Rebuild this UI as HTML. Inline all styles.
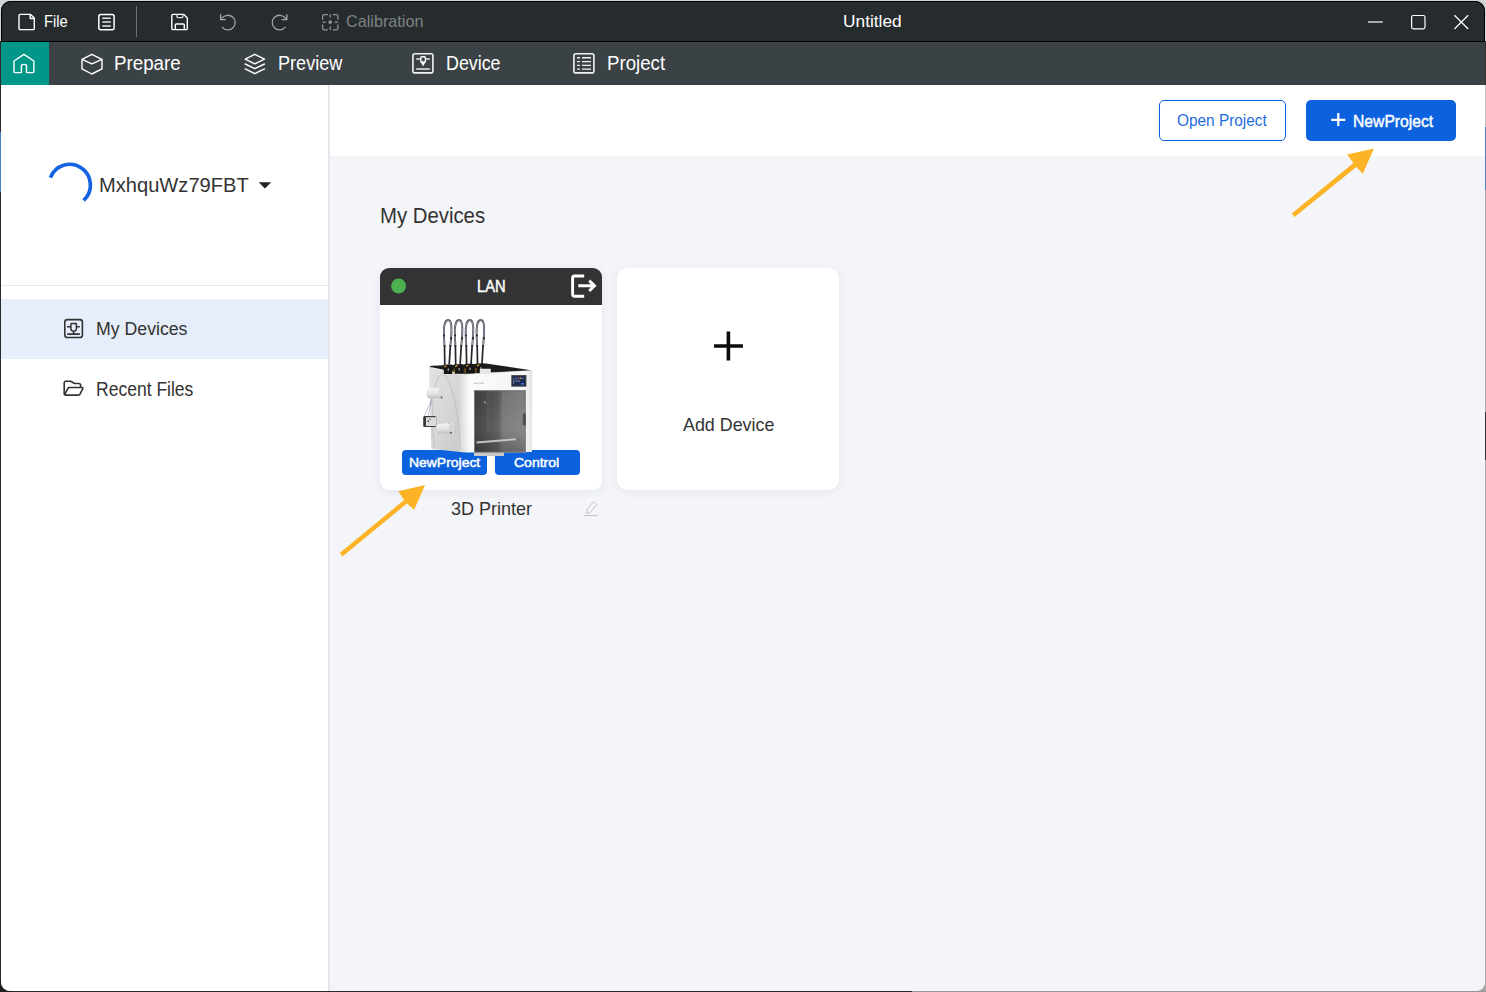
<!DOCTYPE html>
<html><head><meta charset="utf-8">
<style>
*{margin:0;padding:0;box-sizing:border-box}
html,body{width:1486px;height:992px;overflow:hidden;background:#2a2a2a;font-family:"Liberation Sans",sans-serif;position:relative}
.abs{position:absolute}
.t{position:absolute;white-space:nowrap;transform-origin:0 0}
.ov{position:absolute;left:0;top:0;z-index:5}
#win{position:absolute;left:1px;top:1px;width:1484px;height:990px;border-radius:9px;overflow:hidden;background:#fff}
</style></head><body>
<div class="abs" style="left:0;top:0;width:1486px;height:1px;background:#d2d3d4"></div>
<div class="abs" style="left:1485px;top:0;width:1px;height:992px;background:#a9a9a9"></div>
<div class="abs" style="left:1485px;top:41px;width:1px;height:44px;background:#333"></div>
<div class="abs" style="left:1485px;top:85px;width:1px;height:42px;background:#c8c8c8"></div>
<div class="abs" style="left:1485px;top:127px;width:1px;height:63px;background:#4a80c8"></div>
<div class="abs" style="left:1485px;top:412px;width:1px;height:48px;background:#333"></div>
<div class="abs" style="left:0;top:132px;width:1px;height:60px;background:#4a80c8"></div>
<div class="abs" style="left:0;top:0;width:12px;height:12px;background:#d2d3d4"></div>
<div class="abs" style="left:0;top:0;width:1px;height:41px;background:#d2d3d4"></div>
<div class="abs" style="left:1474px;top:0;width:12px;height:12px;background:#d2d3d4"></div>
<div class="abs" style="left:0;top:980px;width:12px;height:12px;background:#1e1e1e"></div>
<div class="abs" style="left:1474px;top:980px;width:12px;height:12px;background:#a9a9a9"></div>
<div class="abs" style="left:912px;top:991px;width:574px;height:1px;background:#9a9a9a"></div>
<div id="win">
  <div class="abs" style="left:0;top:0;width:1484px;height:41px;background:#262c2e;border-top:1px solid #101213"></div>
  <div class="abs" style="left:0;top:40px;width:1484px;height:1px;background:#000"></div>
  <div class="abs" style="left:0;top:41px;width:1484px;height:43px;background:#3b4245"></div>
  <div class="abs" style="left:0;top:41px;width:48px;height:43px;background:#009688"></div>
  <div class="abs" style="left:0;top:84px;width:327px;height:906px;background:#fff"></div>
  <div class="abs" style="left:327px;top:84px;width:1px;height:906px;background:#e2e3e6"></div>
  <div class="abs" style="left:328px;top:84px;width:1px;height:906px;background:#ebecf0"></div>
  <div class="abs" style="left:329px;top:84px;width:1155px;height:906px;background:#f3f5f9"></div>
  <div class="abs" style="left:329px;top:84px;width:1155px;height:71px;background:#fff"></div>
  <div class="abs" style="left:0;top:284px;width:327px;height:1px;background:#e8e8e8"></div>
  <div class="abs" style="left:0;top:298px;width:327px;height:60px;background:#e5eefa"></div>
  <!-- header buttons -->
  <div class="abs" style="left:1158px;top:99px;width:127px;height:41px;border:1px solid #0e62de;border-radius:5px;background:#fff"></div>
  <div class="abs" style="left:1305px;top:99px;width:150px;height:41px;border-radius:5px;background:#0c62de"></div>
  <!-- cards -->
  <div class="abs" style="left:379px;top:267px;width:222px;height:222px;border-radius:9px;background:#fff;box-shadow:0 2px 10px rgba(30,40,70,0.07);overflow:hidden">
     <div class="abs" style="left:0;top:0;width:222px;height:37px;background:#333"></div>
  </div>
  <div class="abs" style="left:616px;top:267px;width:222px;height:222px;border-radius:10px;background:#fff;box-shadow:0 2px 10px rgba(30,40,70,0.07)"></div>
  <div class="abs" style="left:401px;top:449px;width:85px;height:25px;border-radius:4px;background:#0c62de"></div>
  <div class="abs" style="left:494px;top:449px;width:85px;height:25px;border-radius:4px;background:#0c62de"></div>
</div>
<svg class="ov" width="1486" height="992" viewBox="0 0 1486 992" style="z-index:3">
<defs>
 <linearGradient id="corner" x1="0" y1="0" x2="1" y2="0">
  <stop offset="0" stop-color="#d6d6d6" stop-opacity="0"/><stop offset="0.45" stop-color="#e6e6e6"/><stop offset="1" stop-color="#f7f7f7" stop-opacity="0"/>
 </linearGradient>
 <linearGradient id="lside" x1="0" y1="0" x2="1" y2="1">
  <stop offset="0" stop-color="#e2e2e2"/><stop offset="0.5" stop-color="#d6d6d6"/><stop offset="1" stop-color="#c8c8c8"/>
 </linearGradient>
 <linearGradient id="front" x1="0" y1="0" x2="1" y2="0">
  <stop offset="0" stop-color="#e9e9e9"/><stop offset="0.08" stop-color="#fbfbfb"/><stop offset="0.9" stop-color="#f4f4f4"/><stop offset="1" stop-color="#e4e4e4"/>
 </linearGradient>
 <linearGradient id="door" x1="0" y1="0" x2="1" y2="0">
  <stop offset="0" stop-color="#454545"/><stop offset="0.45" stop-color="#626262"/><stop offset="0.55" stop-color="#7a7a7a"/><stop offset="1" stop-color="#8a8a8a"/>
 </linearGradient>
 <linearGradient id="doorv" x1="0" y1="0" x2="0" y2="1">
  <stop offset="0" stop-color="#000" stop-opacity="0.15"/><stop offset="0.6" stop-color="#000" stop-opacity="0"/><stop offset="1" stop-color="#000" stop-opacity="0.2"/>
 </linearGradient>
 <linearGradient id="spool" x1="0" y1="0" x2="0" y2="1">
  <stop offset="0" stop-color="#f4f4f4"/><stop offset="0.6" stop-color="#e2e2e2"/><stop offset="1" stop-color="#bdbdbd"/>
 </linearGradient>
 <linearGradient id="tube" x1="0" y1="0" x2="0" y2="1">
  <stop offset="0" stop-color="#7a7a88"/><stop offset="0.45" stop-color="#5a5a66"/><stop offset="0.5" stop-color="#2a2a30"/><stop offset="1" stop-color="#1e1e22"/>
 </linearGradient>
</defs>
<!-- left side panel -->
<path d="M429.2 368.5 Q429 367 431 367 L464.5 374 L464.5 452.5 L433 449 Q431.3 448.8 431.3 446.8 L429.4 392 Z" fill="url(#lside)"/>
<path d="M457 372.6 L470 373.9 V452.5 L457 451 Z" fill="url(#corner)"/>
<!-- ellipse outline on side -->
<path d="M434.5 449 C431.5 422 431.5 396 436.5 381 C439.5 373.5 444 372.5 447.5 378.5 C452.5 388 458.5 412 460.5 449" fill="none" stroke="#b4b4b4" stroke-width="0.6"/>
<!-- front panel -->
<path d="M464.5 374 L532.4 370.8 L532 452 L464.5 452.5 Z" fill="url(#front)"/>
<!-- top dark band -->
<path d="M429.5 367 Q430 365.8 432 365.8 L486 363.6 L532.6 370.4 L464.5 374.2 Z" fill="#1c1c1c"/>
<path d="M431 367.6 L464.5 374.2 L532.6 370.6" fill="none" stroke="#ffffff" stroke-width="0.8" stroke-opacity="0.7"/>
<!-- door -->
<rect x="474" y="390.2" width="52" height="62.3" fill="url(#door)"/>
<rect x="474" y="390.2" width="52" height="62.3" fill="url(#doorv)"/>
<rect x="474" y="452.5" width="30" height="3.5" fill="#c8c8c8"/>
<rect x="502" y="392" width="21.5" height="46" fill="#8a8a8a" opacity="0.35"/>
<path d="M488 392 V432" stroke="#6a6a6a" stroke-width="1" opacity="0.6"/>
<rect x="474.5" y="390.7" width="51" height="61.5" fill="none" stroke="#8a8a8a" stroke-width="0.8"/>
<path d="M476.6 442.6 L515.7 439.2" stroke="#c4c4c4" stroke-width="2"/>
<path d="M484 401 L486 403.5" stroke="#cfd4e8" stroke-width="0.8"/>
<!-- handle -->
<rect x="522.8" y="413.4" width="3" height="12" rx="0.8" fill="#505050"/>
<!-- screen -->
<rect x="511.3" y="375.1" width="15.1" height="11.6" fill="#3a3f4a"/>
<rect x="512.5" y="376.3" width="12.7" height="9.2" fill="#1e2b4c"/>
<rect x="515.2" y="377.6" width="1.4" height="1.4" fill="#4a7be0"/>
<rect x="517.5" y="377.6" width="1.4" height="1.4" fill="#d06a6a"/>
<rect x="519.8" y="377.6" width="1.4" height="1.4" fill="#e0c050"/>
<rect x="522" y="377.6" width="1.4" height="1.4" fill="#4a7be0"/>
<rect x="515.2" y="380.6" width="5" height="0.9" fill="#8899cc"/>
<rect x="521" y="383" width="3" height="1.6" fill="#3d6fe8"/>
<rect x="513.3" y="378" width="1" height="6" fill="#6677aa"/>
<!-- logo -->
<path d="M473.8 383.2 H478 M479 383.2 H484" stroke="#9a9a9a" stroke-width="0.6"/>
<!-- spools -->
<path d="M428 389 Q427 388 429 387.8 L440 387.8 Q443.4 388.4 443.4 393 Q443.4 397.8 440 398.3 L429 398.3 Q426.6 398 426.6 393 Q426.6 390 428 389 Z" fill="url(#spool)"/>
<ellipse cx="441" cy="393" rx="2.4" ry="5" fill="#d8d8d8"/>
<circle cx="441.5" cy="397.6" r="1" fill="#555"/>
<path d="M438.5 424 L451 423 Q454 423.6 454 428.3 Q454 433.4 451 433.6 L438.5 433.6 Q436.6 433 436.6 428.5 Q436.6 424.4 438.5 424 Z" fill="url(#spool)"/>
<ellipse cx="451.2" cy="428.4" rx="2.4" ry="5" fill="#d6d6d6"/>
<circle cx="450.8" cy="432.8" r="1" fill="#555"/>
<circle cx="449" cy="422.9" r="0.9" fill="#bbb"/>
<!-- wire -->
<path d="M431.8 399 L424.5 416 M431.8 401 L428 416" stroke="#7a7f9a" stroke-width="0.5" fill="none"/>
<!-- box -->
<rect x="423.2" y="416" width="13" height="11" rx="1.5" fill="#3a3a3a"/>
<rect x="426" y="417.2" width="10" height="8.8" fill="#dcdcdc"/>
<rect x="427.6" y="420.5" width="1.4" height="1.4" fill="#333"/>
<rect x="429.5" y="418.6" width="1.2" height="1.2" fill="#555"/>
<!-- connectors -->
<path d="M443.5 364.6 H451.7 L452.3 374.1 H443.9 Z" fill="#161616"/>
<path d="M443.9 366.8 L446.1 365.2 L446.9 366.2 L444.7 367.6 Z" fill="#e3a21e"/>
<rect x="447.7" y="368.4" width="1.1" height="2.4" fill="#bdbdbd"/>
<path d="M454.4 364.2 H462.6 L463.2 373.7 H454.8 Z" fill="#161616"/>
<path d="M454.8 366.4 L457.0 364.8 L457.8 365.8 L455.6 367.2 Z" fill="#e3a21e"/>
<rect x="458.6" y="368.0" width="1.1" height="2.4" fill="#bdbdbd"/>
<rect x="453.8" y="368.7" width="0.7" height="4.8" fill="#d79a1c"/>
<path d="M465.3 363.8 H473.5 L474.1 373.3 H465.7 Z" fill="#161616"/>
<path d="M465.7 366.0 L467.9 364.4 L468.7 365.4 L466.5 366.8 Z" fill="#e3a21e"/>
<rect x="469.5" y="367.6" width="1.1" height="2.4" fill="#bdbdbd"/>
<rect x="464.7" y="368.3" width="0.7" height="4.8" fill="#d79a1c"/>
<path d="M476.2 363.4 H484.4 L485.0 372.9 H476.6 Z" fill="#161616"/>
<path d="M476.6 365.6 L478.8 364.0 L479.6 365.0 L477.4 366.4 Z" fill="#e3a21e"/>
<rect x="480.4" y="367.2" width="1.1" height="2.4" fill="#bdbdbd"/>
<rect x="475.6" y="367.9" width="0.7" height="4.8" fill="#d79a1c"/>
<rect x="479.8" y="368.8" width="11" height="5.2" rx="0.8" fill="#e6e6e6"/>
<!-- tubes -->
<path d="M444.5 346 C443.8 336 443.7 330 444.2 326.5 C444.8 322 446.9 320 448.1 320 C449.7 320 451.2 322.5 451.4 327.5 C451.6 333 451.0 340 450.4 346" fill="none" stroke="#3c3c48" stroke-width="1.9" stroke-linecap="round"/>
<path d="M444.5 346 C443.8 336 443.7 330 444.2 326.5 C444.8 322 446.9 320 448.1 320 C449.7 320 451.2 322.5 451.4 327.5 C451.6 333 451.0 340 450.4 346" fill="none" stroke="#c8c8d8" stroke-width="0.7" stroke-linecap="round"/>
<path d="M444.5 345 C444.6 352 444.7 358 444.8 364.5 M450.4 345 C450.0 352 449.6 358 449.2 364.5" fill="none" stroke="#25252c" stroke-width="1.7" stroke-linecap="butt"/>
<circle cx="444.2" cy="335.5" r="0.9" fill="#1a1a1a"/>
<circle cx="451.2" cy="338.3" r="1.1" fill="#1a1a1a"/>
<path d="M455.4 346 C454.7 336 454.6 330 455.1 326.5 C455.7 322 457.8 320 459.0 320 C460.6 320 462.1 322.5 462.3 327.5 C462.5 333 461.9 340 461.3 346" fill="none" stroke="#3c3c48" stroke-width="1.9" stroke-linecap="round"/>
<path d="M455.4 346 C454.7 336 454.6 330 455.1 326.5 C455.7 322 457.8 320 459.0 320 C460.6 320 462.1 322.5 462.3 327.5 C462.5 333 461.9 340 461.3 346" fill="none" stroke="#c8c8d8" stroke-width="0.7" stroke-linecap="round"/>
<path d="M455.4 345 C455.5 352 455.6 358 455.7 364.5 M461.3 345 C460.9 352 460.5 358 460.1 364.5" fill="none" stroke="#25252c" stroke-width="1.7" stroke-linecap="butt"/>
<circle cx="455.1" cy="335.5" r="0.9" fill="#1a1a1a"/>
<circle cx="462.1" cy="338.3" r="1.1" fill="#1a1a1a"/>
<path d="M466.3 346 C465.6 336 465.5 330 466.0 326.5 C466.6 322 468.7 320 469.9 320 C471.5 320 473.0 322.5 473.2 327.5 C473.4 333 472.8 340 472.2 346" fill="none" stroke="#3c3c48" stroke-width="1.9" stroke-linecap="round"/>
<path d="M466.3 346 C465.6 336 465.5 330 466.0 326.5 C466.6 322 468.7 320 469.9 320 C471.5 320 473.0 322.5 473.2 327.5 C473.4 333 472.8 340 472.2 346" fill="none" stroke="#c8c8d8" stroke-width="0.7" stroke-linecap="round"/>
<path d="M466.3 345 C466.4 352 466.5 358 466.6 364.5 M472.2 345 C471.8 352 471.4 358 471.0 364.5" fill="none" stroke="#25252c" stroke-width="1.7" stroke-linecap="butt"/>
<circle cx="466.0" cy="335.5" r="0.9" fill="#1a1a1a"/>
<circle cx="473.0" cy="338.3" r="1.1" fill="#1a1a1a"/>
<path d="M477.2 346 C476.5 336 476.4 330 476.9 326.5 C477.5 322 479.6 320 480.8 320 C482.4 320 483.9 322.5 484.1 327.5 C484.3 333 483.7 340 483.1 346" fill="none" stroke="#3c3c48" stroke-width="1.9" stroke-linecap="round"/>
<path d="M477.2 346 C476.5 336 476.4 330 476.9 326.5 C477.5 322 479.6 320 480.8 320 C482.4 320 483.9 322.5 484.1 327.5 C484.3 333 483.7 340 483.1 346" fill="none" stroke="#c8c8d8" stroke-width="0.7" stroke-linecap="round"/>
<path d="M477.2 345 C477.3 352 477.4 358 477.5 364.5 M483.1 345 C482.7 352 482.3 358 481.9 364.5" fill="none" stroke="#25252c" stroke-width="1.7" stroke-linecap="butt"/>
<circle cx="476.9" cy="335.5" r="0.9" fill="#1a1a1a"/>
<circle cx="483.9" cy="338.3" r="1.1" fill="#1a1a1a"/>
</svg>

<div class="t" style="left:43.9px;top:12.6px;font-size:17.01px;line-height:17.01px;transform:scaleX(0.869);color:#fff;font-weight:normal">File</div>
<div class="t" style="left:843.0px;top:12.5px;font-size:17.15px;line-height:17.15px;transform:scaleX(1.010);color:#fff;font-weight:normal">Untitled</div>
<div class="t" style="left:346.2px;top:12.6px;font-size:17.15px;line-height:17.15px;transform:scaleX(0.945);color:#7d8284;font-weight:normal">Calibration</div>
<div class="t" style="left:114.0px;top:53.5px;font-size:19.77px;line-height:19.77px;transform:scaleX(0.947);color:#fff;font-weight:normal">Prepare</div>
<div class="t" style="left:277.8px;top:53.5px;font-size:19.77px;line-height:19.77px;transform:scaleX(0.915);color:#fff;font-weight:normal">Preview</div>
<div class="t" style="left:445.8px;top:53.5px;font-size:19.77px;line-height:19.77px;transform:scaleX(0.902);color:#fff;font-weight:normal">Device</div>
<div class="t" style="left:606.6px;top:53.5px;font-size:19.77px;line-height:19.77px;transform:scaleX(0.944);color:#fff;font-weight:normal">Project</div>
<div class="t" style="left:99.2px;top:174.6px;font-size:20.20px;line-height:20.20px;transform:scaleX(0.996);color:#333;font-weight:normal">MxhquWz79FBT</div>
<div class="t" style="left:95.5px;top:320.2px;font-size:18.90px;line-height:18.90px;transform:scaleX(0.937);color:#333;font-weight:normal">My Devices</div>
<div class="t" style="left:95.5px;top:379.5px;font-size:19.48px;line-height:19.48px;transform:scaleX(0.900);color:#333;font-weight:normal">Recent Files</div>
<div class="t" style="left:1177.3px;top:113.2px;font-size:16.86px;line-height:16.86px;transform:scaleX(0.912);color:#1f6bdb;font-weight:normal">Open Project</div>
<div class="t" style="left:1353.3px;top:112.9px;font-size:17.15px;line-height:17.15px;transform:scaleX(0.915);color:#fff;font-weight:normal;-webkit-text-stroke:0.45px #fff">NewProject</div>
<div class="t" style="left:379.8px;top:204.7px;font-size:21.66px;line-height:21.66px;transform:scaleX(0.939);color:#333;font-weight:normal">My Devices</div>
<div class="t" style="left:476.6px;top:278.7px;font-size:15.99px;line-height:15.99px;transform:scaleX(0.920);color:#fff;font-weight:normal;-webkit-text-stroke:0.45px #fff">LAN</div>
<div class="t" style="left:408.9px;top:455.9px;font-size:13.08px;line-height:13.08px;transform:scaleX(1.065);color:#fff;font-weight:normal;-webkit-text-stroke:0.45px #fff">NewProject</div>
<div class="t" style="left:514.2px;top:455.9px;font-size:13.08px;line-height:13.08px;transform:scaleX(1.072);color:#fff;font-weight:normal;-webkit-text-stroke:0.45px #fff">Control</div>
<div class="t" style="left:450.7px;top:499.6px;font-size:18.17px;line-height:18.17px;transform:scaleX(0.992);color:#333;font-weight:normal">3D Printer</div>
<div class="t" style="left:682.8px;top:415.6px;font-size:18.17px;line-height:18.17px;transform:scaleX(0.984);color:#333;font-weight:normal">Add Device</div>

<svg class="ov" width="1486" height="992" viewBox="0 0 1486 992">
<g fill="none" stroke-linecap="round" stroke-linejoin="round">
 <!-- file -->
 <path d="M19 15.6 Q19 14.4 20.2 14.4 H30.6 L34.3 18.1 V28.4 Q34.3 29.6 33.1 29.6 H20.2 Q19 29.6 19 28.4 Z" stroke="#fff" stroke-width="1.4"/>
 <path d="M30.2 14.6 V18.5 H34.1" stroke="#fff" stroke-width="1.4"/>
 <!-- list -->
 <rect x="98.8" y="14.4" width="15.3" height="15.4" rx="2" stroke="#fff" stroke-width="1.5"/>
 <path d="M102.3 18.3 H110.8 M102.3 22.1 H110.8 M102.3 26 H110.8" stroke="#e6e6e6" stroke-width="1.5" stroke-linecap="butt"/>
 <!-- separator -->
 <path d="M136.5 6 V37" stroke="#6d7173" stroke-width="1" stroke-linecap="butt"/>
 <!-- save -->
 <path d="M171.8 15.6 Q171.8 14.4 173 14.4 H183.9 L187.3 17.9 V28.4 Q187.3 29.6 186.1 29.6 H173 Q171.8 29.6 171.8 28.4 Z" stroke="#fff" stroke-width="1.4"/>
 <path d="M176.9 14.6 V16.6 Q176.9 17.6 177.9 17.6 H181.9 Q182.9 17.6 182.9 16.6 V14.6" stroke="#ddd" stroke-width="1.3"/>
 <path d="M175.3 29.4 V25 Q175.3 24 176.3 24 H183.3 Q184.3 24 184.3 25 V29.4" stroke="#fff" stroke-width="1.4"/>
 <!-- undo -->
 <path d="M222.3 27.3 A7.3 7.3 0 1 0 222 18.2" stroke="#a3a5a6" stroke-width="1.3"/>
 <path d="M220.6 14.2 V19.6 H225.8" stroke="#a3a5a6" stroke-width="1.4" stroke-linecap="butt" stroke-linejoin="miter"/>
 <!-- redo -->
 <path d="M285.1 27.3 A7.3 7.3 0 1 1 285.4 18.2" stroke="#a3a5a6" stroke-width="1.3"/>
 <path d="M286.8 14.2 V19.6 H281.6" stroke="#a3a5a6" stroke-width="1.4" stroke-linecap="butt" stroke-linejoin="miter"/>
 <!-- calibration -->
 <g stroke="#8e9294" stroke-width="1.3" stroke-linecap="butt">
  <path d="M322.6 19.7 V16.2 Q322.6 14.6 324.2 14.6 H327.9"/>
  <path d="M332.7 14.6 H336.3 Q337.9 14.6 337.9 16.2 V19.7"/>
  <path d="M337.9 24.5 V28.2 Q337.9 29.8 336.3 29.8 H332.7"/>
  <path d="M327.9 29.8 H324.2 Q322.6 29.8 322.6 28.2 V24.5"/>
  <path d="M330.2 14.3 V17.6 M330.2 26.6 V30 M322.4 22.1 H325.8 M334.8 22.1 H338.2"/>
 </g>
 <circle cx="330.2" cy="22.1" r="1.9" fill="#8e9294"/>
 <!-- window controls -->
 <path d="M1368 22 H1382.8" stroke="#fff" stroke-width="1.2" stroke-linecap="butt"/>
 <rect x="1411.6" y="15.5" width="13.4" height="13.4" rx="1.8" stroke="#fff" stroke-width="1.2"/>
 <path d="M1454.4 15.3 L1468.2 29 M1468.2 15.3 L1454.4 29" stroke="#fff" stroke-width="1.2" stroke-linecap="butt"/>
 <!-- home -->
 <path d="M21.4 72.6 V66 Q21.4 64.4 23.95 64.4 Q26.5 64.4 26.5 66 V72.6 H32.9 Q33.85 72.6 33.85 71.7 V61 L23.9 54.4 L14 61 V71.7 Q14 72.6 14.9 72.6 Z" stroke="#fff" stroke-width="1.4"/>
 <!-- cube -->
 <path d="M91.8 54.3 L102 59.3 V68.9 L91.8 74 L82 68.9 V59.3 Z M82 59.3 L91.8 63.9 L102 59.3" stroke="#fff" stroke-width="1.4"/>
 <!-- layers -->
 <path d="M254.8 54.3 L264.5 59.2 L254.8 63.9 L245.2 59.2 Z M245.2 64 L254.8 68.7 L264.5 64 M245.2 68.9 L254.8 73.7 L264.5 68.9" stroke="#fff" stroke-width="1.4"/>
 <!-- device tab -->
 <rect x="412.9" y="53.8" width="20" height="19.1" rx="2" stroke="#f2f2f2" stroke-width="1.6"/>
 <path d="M416.2 59 H420.2 M425.7 59 H429.8 M416.2 69 H429.8" stroke="#e8e8e8" stroke-width="1.5" stroke-linecap="butt"/>
 <rect x="420.8" y="56.8" width="4.6" height="5.4" rx="1" stroke="#fff" stroke-width="1.4"/>
 <path d="M421.2 62.3 L423.1 65.8 L425 62.3 Z" fill="#fff" stroke="#fff" stroke-width="0.6"/>
 <!-- project tab -->
 <rect x="573.9" y="53.8" width="20" height="19.1" rx="2" stroke="#f2f2f2" stroke-width="1.6"/>
 <path d="M577 57.8 H579.9 M582 57.8 H591 M577 61.6 H579.9 M582 61.6 H591 M577 65.4 H579.9 M582 65.4 H591 M577 69.1 H579.9 M582 69.1 H591" stroke="#f0f0f0" stroke-width="1.4" stroke-linecap="butt"/>
 <!-- spinner -->
 <path d="M50.4 177.6 A20.7 20.7 0 1 1 83.6 200.4" stroke="#1463e0" stroke-width="3.7" stroke-linecap="butt"/>
 <!-- dropdown -->
 <path d="M258.7 182.3 H271.2 L264.9 188.6 Z" fill="#222" stroke="none"/>
 <!-- sidebar device icon -->
 <rect x="64.8" y="319.6" width="17.6" height="17.9" rx="2.6" stroke="#333" stroke-width="1.6"/>
 <path d="M67 326.7 H70.4 M76.8 326.7 H79.8" stroke="#333" stroke-width="1.4" stroke-linecap="butt"/>
 <path d="M70.9 324.2 Q70.9 323.6 71.5 323.6 H75.8 Q76.4 323.6 76.4 324.2 V329 Q76.4 330.8 73.65 331.2 Q70.9 330.8 70.9 329 Z" stroke="#333" stroke-width="1.5"/>
 <path d="M73.65 331.2 V333.5 M67.2 334.2 H79.9" stroke="#333" stroke-width="1.7" stroke-linecap="butt"/>
 <!-- folder -->
 <path d="M80.6 387.3 V385.2 Q80.6 383.5 78.9 383.5 H74.6 L70.6 381.2 H65.9 Q64.2 381.2 64.2 382.9 V393.4 Q64.2 395.1 65.9 395.1 H78.6 Q79.6 395.1 80 394.2 L82.8 388.6 Q83.2 387.5 82 387.5 H69.3 Q68.3 387.5 67.9 388.4 L64.6 394.6" stroke="#333" stroke-width="1.6"/>
 <!-- newproject plus -->
 <path d="M1331.2 119.8 H1345.3 M1338.3 113 V126.1" stroke="#fff" stroke-width="2.2" stroke-linecap="butt"/>
 <!-- green dot -->
 <circle cx="398.6" cy="286" r="7.5" fill="#4caf50" stroke="none"/>
 <!-- exit icon -->
 <path d="M584.2 276 H574.6 Q572.6 276 572.6 278 V294.3 Q572.6 296.3 574.6 296.3 H584.2" stroke="#fff" stroke-width="2.9" stroke-linecap="butt"/>
 <path d="M578.3 285.8 H594.5 M589.2 280.6 L594.5 285.8 L589.2 291" stroke="#fff" stroke-width="2.9" stroke-linecap="butt" stroke-linejoin="miter"/>
 <!-- add plus -->
 <path d="M714 346 H742.9 M728.4 331.4 V360.5" stroke="#0a0a0a" stroke-width="3.6" stroke-linecap="butt"/>
 <!-- pencil -->
 <path d="M586.7 513.2 L587.3 509.1 L592.8 502.2 Q593.3 501.7 593.9 502.1 L596.3 504.1 Q596.8 504.6 596.3 505.1 L590.8 512 Z" stroke="#c4c4c4" stroke-width="1"/>
 <path d="M584 515.5 H597.9" stroke="#c8c8c8" stroke-width="1.2" stroke-linecap="butt"/>
</g>
<!-- window corners -->
<path d="M0 0 H1486 V41 H1485 V10.5 A9.5 9.5 0 0 0 1475.5 1 H10.5 A9.5 9.5 0 0 0 1 10.5 V41 H0 Z" fill="#d2d3d4"/>
<path d="M1.5 41 V10.5 A9 9 0 0 1 10.5 1.5 H1475.5 A9 9 0 0 1 1484.5 10.5 V41" fill="none" stroke="#000" stroke-width="1"/>
<!-- arrows -->
<g fill="#fdb326">
 <path d="M1291.8 213.5 L1294.6 217.1 L1356.3 166.9 L1362.8 173.8 L1373.9 148.6 L1347.2 154.5 L1353.4 162.9 Z"/>
 <path d="M339.7 552.9 L342.5 556.5 L406.8 503.6 L414.2 509.8 L425 484.9 L398.4 491.2 L404.1 500 Z"/>
</g>
</svg>
</body></html>
